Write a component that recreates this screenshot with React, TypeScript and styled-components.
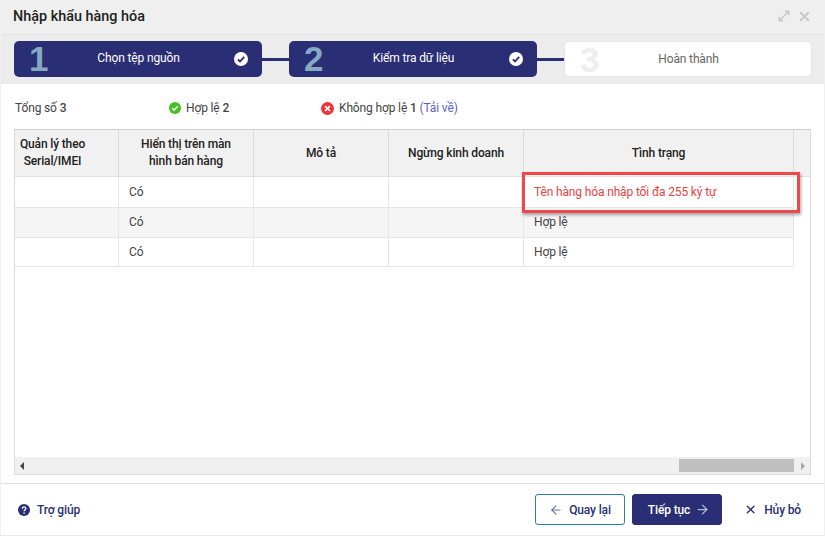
import React from "react";
import styled, { createGlobalStyle } from "styled-components";
import { ArrowLeft, ArrowRight, X } from "lucide-react";

const GlobalStyle = createGlobalStyle`
  html, body {
    margin: 0;
    padding: 0;
    background: #fff;
  }
  * {
    box-sizing: border-box;
  }
`;

const Dialog = styled.div`
  width: 825px;
  height: 536px;
  display: flex;
  flex-direction: column;
  background: #fff;
  color: #333;
  font-family: Roboto, "Liberation Sans", sans-serif;
  font-size: 12px;
  letter-spacing: -0.14px;
  border-left: 1px solid #f0f0f0;
  border-right: 1px solid #f0f0f0;
  border-bottom: 1px solid #e8e8e8;
  overflow: hidden;
`;

const Header = styled.div`
  height: 35px;
  flex: none;
  display: flex;
  align-items: center;
  justify-content: space-between;
  padding: 0 12px 2px 12px;
  background: #efefef;
  border-bottom: 1px solid #e2e2e2;
`;

const Title = styled.div`
  font-size: 14.4px;
  font-weight: 500;
  letter-spacing: 0;
  color: #222;
`;

const WindowTools = styled.div`
  display: flex;
  align-items: center;
  gap: 7px;
  color: #c8c8c8;
`;

const Steps = styled.div`
  height: 49px;
  flex: none;
  display: flex;
  align-items: center;
  padding: 0 13px 1px 13px;
  background: #ececec;
`;

const Step = styled.div<{ $done?: boolean }>`
  width: 248px;
  height: 36px;
  flex: none;
  display: grid;
  grid-template-columns: 1fr auto 1fr;
  align-items: center;
  padding: 0 14px 0 15px;
  border-radius: 5px;
  background: ${(p) => (p.$done ? "#2a2e74" : "#fff")};
  border: ${(p) => (p.$done ? "none" : "1px solid #e4e4e4")};
  color: ${(p) => (p.$done ? "#fff" : "#666")};
`;

const StepNumber = styled.div<{ $done?: boolean }>`
  font-size: 35px;
  font-weight: 700;
  line-height: 36px;
  font-family: "Liberation Sans", Arial, sans-serif;
  color: ${(p) => (p.$done ? "#86a9c6" : "#eeeeee")};
`;

const StepLabel = styled.div`
  text-align: center;
  padding-bottom: 2px;
`;

const StepCheck = styled.div`
  display: flex;
  justify-content: flex-end;
`;

const Connector = styled.div`
  width: 27px;
  height: 3px;
  flex: none;
  background: #2a2e74;
`;

const Summary = styled.div`
  height: 45px;
  flex: none;
  display: flex;
  align-items: center;
  padding: 3px 14px 0 14px;
  color: #444;
`;

const SummaryItem = styled.div<{ $width: number }>`
  width: ${(p) => p.$width}px;
  display: flex;
  align-items: center;
  gap: 5px;
  flex: none;

  b {
    font-weight: 500;
  }
`;

const DownloadLink = styled.span`
  color: #5a5fd6;
`;

const TableFrame = styled.div`
  width: 797px;
  height: 346px;
  flex: none;
  margin-left: 13px;
  position: relative;
  display: flex;
  flex-direction: column;
  border: 1px solid #dcdcdc;
  border-top-color: #cfcfcf;
`;

const Rows = styled.div`
  flex: 1;
`;

const HeadRow = styled.div`
  display: grid;
  grid-template-columns: 104px 135px 135px 135px 270px 1fr;
  height: 47px;
  background: #f1f1f1;
  border-bottom: 1px solid #e2e2e2;
`;

const HeadCell = styled.div<{ $clipped?: boolean }>`
  display: flex;
  align-items: center;
  justify-content: center;
  text-align: center;
  padding: ${(p) => (p.$clipped ? "0 28px 0 0" : "0 18px")};
  line-height: 17px;
  font-weight: 500;
  color: #222;
  border-right: 1px solid #dadada;
`;

const BodyRow = styled.div<{ $striped?: boolean; $height: number }>`
  display: grid;
  grid-template-columns: 104px 135px 135px 135px 270px;
  width: 779px;
  height: ${(p) => p.$height}px;
  background: ${(p) => (p.$striped ? "#f5f5f5" : "#fff")};
  border-bottom: 1px solid #e6e6e6;
`;

const BodyCell = styled.div<{ $error?: boolean }>`
  display: flex;
  align-items: center;
  padding: 0 0 1px 10px;
  color: ${(p) => (p.$error ? "#e8433f" : "#444")};
  border-right: 1px solid #e6e6e6;
`;

const Highlight = styled.div`
  position: absolute;
  left: 507px;
  top: 42px;
  width: 278px;
  height: 41px;
  border: 3px solid #f2474a;
  box-shadow: 1px 2px 3px rgba(0, 0, 0, 0.35);
  pointer-events: none;
`;

const ScrollBar = styled.div`
  height: 17px;
  flex: none;
  display: flex;
  align-items: center;
  justify-content: space-between;
  background: #f0f0f0;
  padding: 0 5px;
`;

const ScrollThumb = styled.div`
  width: 115px;
  height: 13px;
  margin-left: auto;
  margin-right: 7px;
  background: #bfbfbf;
`;

const ScrollArrow = styled.div<{ $right?: boolean }>`
  width: 0;
  height: 0;
  border-top: 4px solid transparent;
  border-bottom: 4px solid transparent;
  ${(p) =>
    p.$right
      ? "border-left: 4px solid #a8a8a8;"
      : "border-right: 4px solid #444;"}
`;

const Footer = styled.div`
  flex: 1;
  margin-top: 8px;
  display: flex;
  align-items: center;
  padding: 0 23px 0 17px;
  border-top: 1px solid #e2e2e2;
`;

const HelpLink = styled.div`
  display: flex;
  align-items: center;
  gap: 7px;
  color: #2a2e74;
  font-weight: 500;
  margin-right: auto;
`;

const Button = styled.div<{ $primary?: boolean }>`
  width: 90px;
  height: 31px;
  display: flex;
  align-items: center;
  justify-content: center;
  gap: ${(p) => (p.$primary ? "5px" : "6px")};
  padding-left: ${(p) => (p.$primary ? "4px" : "0")};
  border-radius: 3px;
  font-weight: 500;
  background: ${(p) => (p.$primary ? "#2a2e74" : "#fff")};
  color: ${(p) => (p.$primary ? "#fff" : "#2a2e74")};
  border: 1px solid ${(p) => (p.$primary ? "#2a2e74" : "#2f7f9f")};
  margin-right: 7px;
`;

const ArrowTint = styled.span<{ $light?: boolean }>`
  display: flex;
  color: ${(p) => (p.$light ? "#b9bbd8" : "#6d71a0")};
`;

const CancelButton = styled.div`
  display: flex;
  align-items: center;
  gap: 7px;
  margin-left: 15px;
  width: 57px;
  flex: none;
  white-space: nowrap;
  color: #2a2e74;
  font-weight: 500;
`;

const CheckBadge = ({ size, bg, fg }: { size: number; bg: string; fg: string }) => (
  <svg width={size} height={size} viewBox="0 0 16 16" style={{ flex: "none" }}>
    <circle cx="8" cy="8" r="8" fill={bg} />
    <path d="M4.4 8.3l2.5 2.5 4.8-5.2" fill="none" stroke={fg} strokeWidth="2" />
  </svg>
);

const ErrorBadge = () => (
  <svg width="13" height="13" viewBox="0 0 16 16" style={{ flex: "none" }}>
    <circle cx="8" cy="8" r="8" fill="#ee3338" />
    <path d="M5 5l6 6M11 5l-6 6" fill="none" stroke="#fff" strokeWidth="2" />
  </svg>
);

const HelpBadge = () => (
  <svg width="12" height="12" viewBox="0 0 16 16" style={{ flex: "none" }}>
    <circle cx="8" cy="8" r="8" fill="#2a2e74" />
    <path d="M5.8 6.2c0-3 4.6-3 4.6-.2 0 1.8-2.3 1.8-2.3 3.6" fill="none" stroke="#fff" strokeWidth="1.8" />
    <circle cx="8.1" cy="12" r="1.1" fill="#fff" />
  </svg>
);

const ExpandIcon = () => (
  <svg width="12" height="12" viewBox="0 0 12 12">
    <path d="M1 11L11 1" stroke="#c8c8c8" strokeWidth="1.4" />
    <path d="M7 1h4v4z" fill="#c8c8c8" stroke="#c8c8c8" />
    <path d="M1 7v4h4z" fill="#c8c8c8" stroke="#c8c8c8" />
  </svg>
);

const rows = [
  { status: "Tên hàng hóa nhập tối đa 255 ký tự", error: true, height: 31 },
  { status: "Hợp lệ", striped: true, height: 30 },
  { status: "Hợp lệ", height: 29 },
];

export default function App() {
  return (
    <>
      <GlobalStyle />
      <Dialog>
        <Header>
          <Title>Nhập khẩu hàng hóa</Title>
          <WindowTools>
            <ExpandIcon />
            <X size={15} strokeWidth={3} />
          </WindowTools>
        </Header>
        <Steps>
          <Step $done>
            <StepNumber $done>1</StepNumber>
            <StepLabel>Chọn tệp nguồn</StepLabel>
            <StepCheck>
              <CheckBadge size={14} bg="#fff" fg="#2a2e74" />
            </StepCheck>
          </Step>
          <Connector />
          <Step $done>
            <StepNumber $done>2</StepNumber>
            <StepLabel>Kiểm tra dữ liệu</StepLabel>
            <StepCheck>
              <CheckBadge size={14} bg="#fff" fg="#2a2e74" />
            </StepCheck>
          </Step>
          <Connector />
          <Step>
            <StepNumber>3</StepNumber>
            <StepLabel>Hoàn thành</StepLabel>
            <StepCheck />
          </Step>
        </Steps>
        <Summary>
          <SummaryItem $width={154}>
            <span>
              Tổng số <b>3</b>
            </span>
          </SummaryItem>
          <SummaryItem $width={152}>
            <CheckBadge size={12} bg="#43c11f" fg="#fff" />
            <span>
              Hợp lệ <b>2</b>
            </span>
          </SummaryItem>
          <SummaryItem $width={200}>
            <ErrorBadge />
            <span>
              Không hợp lệ <b>1</b> <DownloadLink>(Tải về)</DownloadLink>
            </span>
          </SummaryItem>
        </Summary>
        <TableFrame>
          <Rows>
            <HeadRow>
              <HeadCell $clipped>Quản lý theo Serial/IMEI</HeadCell>
              <HeadCell>Hiển thị trên màn hình bán hàng</HeadCell>
              <HeadCell>Mô tả</HeadCell>
              <HeadCell>Ngừng kinh doanh</HeadCell>
              <HeadCell>Tình trạng</HeadCell>
            </HeadRow>
            {rows.map((row, i) => (
              <BodyRow key={i} $striped={row.striped} $height={row.height}>
                <BodyCell />
                <BodyCell>Có</BodyCell>
                <BodyCell />
                <BodyCell />
                <BodyCell $error={row.error}>{row.status}</BodyCell>
              </BodyRow>
            ))}
          </Rows>
          <ScrollBar>
            <ScrollArrow />
            <ScrollThumb />
            <ScrollArrow $right />
          </ScrollBar>
          <Highlight />
        </TableFrame>
        <Footer>
          <HelpLink>
            <HelpBadge />
            Trợ giúp
          </HelpLink>
          <Button>
            <ArrowTint>
              <ArrowLeft size={14} />
            </ArrowTint>
            Quay lại
          </Button>
          <Button $primary>
            Tiếp tục
            <ArrowTint $light>
              <ArrowRight size={15} />
            </ArrowTint>
          </Button>
          <CancelButton>
            <X size={15} strokeWidth={2.5} />
            Hủy bỏ
          </CancelButton>
        </Footer>
      </Dialog>
    </>
  );
}
